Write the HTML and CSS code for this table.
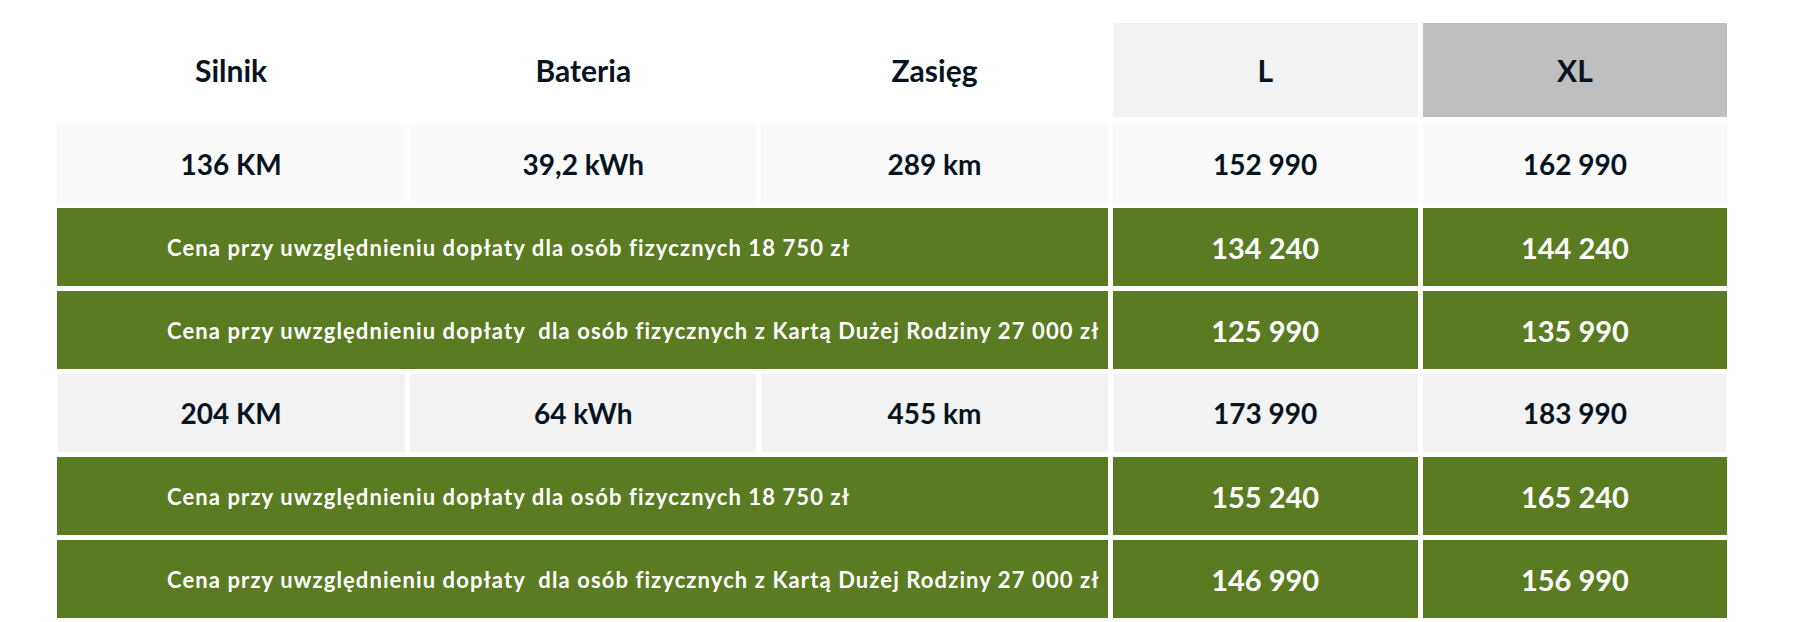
FILE: index.html
```html
<!DOCTYPE html>
<html lang="pl">
<head>
<meta charset="utf-8">
<title>Cennik</title>
<link rel="stylesheet" href="styles.css">
</head>
<body>
<table class="price-table">
  <colgroup>
    <col class="c-wide"><col class="c-mid"><col class="c-mid"><col class="c-l"><col class="c-xl">
  </colgroup>
  <thead>
    <tr class="head-row">
      <th>Silnik</th>
      <th>Bateria</th>
      <th>Zasięg</th>
      <th class="h-l">L</th>
      <th class="h-xl">XL</th>
    </tr>
  </thead>
  <tbody>
    <tr class="spec-row light">
      <td>136 KM</td>
      <td>39,2 kWh</td>
      <td>289 km</td>
      <td>152 990</td>
      <td>162 990</td>
    </tr>
    <tr class="green-row">
      <td colspan="3" class="label">Cena przy uwzględnieniu dopłaty dla osób fizycznych 18 750 zł</td>
      <td>134 240</td>
      <td>144 240</td>
    </tr>
    <tr class="green-row">
      <td colspan="3" class="label">Cena przy uwzględnieniu dopłaty&nbsp; dla osób fizycznych z Kartą Dużej Rodziny 27 000 zł</td>
      <td>125 990</td>
      <td>135 990</td>
    </tr>
    <tr class="spec-row grey">
      <td>204 KM</td>
      <td>64 kWh</td>
      <td>455 km</td>
      <td>173 990</td>
      <td>183 990</td>
    </tr>
    <tr class="green-row">
      <td colspan="3" class="label">Cena przy uwzględnieniu dopłaty dla osób fizycznych 18 750 zł</td>
      <td>155 240</td>
      <td>165 240</td>
    </tr>
    <tr class="green-row">
      <td colspan="3" class="label">Cena przy uwzględnieniu dopłaty&nbsp; dla osób fizycznych z Kartą Dużej Rodziny 27 000 zł</td>
      <td>146 990</td>
      <td>156 990</td>
    </tr>
  </tbody>
</table>
</body>
</html>
```
FILE: styles.css
```css
html, body {
  margin: 0;
  padding: 0;
  background: #ffffff;
}

body {
  padding: 18px 0 0 52px;
  font-family: "Lato", "Liberation Sans", sans-serif;
  color: #05141f;
}

.price-table {
  border-collapse: separate;
  border-spacing: 5px;
  table-layout: fixed;
  width: 1680px;
}

.c-wide { width: 348px; }
.c-mid { width: 346px; }
.c-l { width: 305px; }
.c-xl { width: 304px; }

.price-table th,
.price-table td {
  padding: 0;
  text-align: center;
  vertical-align: middle;
}

.head-row th {
  height: 94px;
  font-size: 30px;
  font-weight: 700;
  background: #ffffff;
  border-bottom: 3px solid transparent;
  background-clip: padding-box;
}

.head-row .h-l { background-color: #f2f2f2; }
.head-row .h-xl { background-color: #bfbfbf; }

.spec-row td {
  height: 78px;
  font-size: 28px;
  font-weight: 700;
}

.spec-row.light td { background: #fafafa; }
.spec-row.grey td { background: #f2f2f2; }

.green-row td {
  height: 78px;
  background: #5b7b22;
  color: #ffffff;
  font-size: 29px;
  font-weight: 700;
}

.green-row td.label {
  text-align: left;
  padding-left: 110px;
  font-size: 22px;
  letter-spacing: 1.1px;
}
```
